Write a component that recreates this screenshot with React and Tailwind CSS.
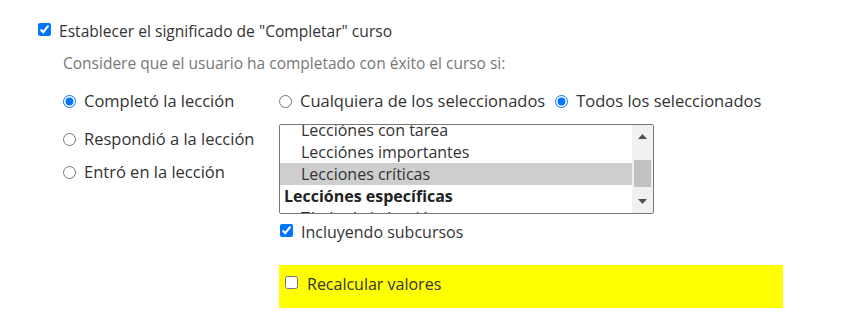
const font = { fontFamily: '"Open Sans", Lato, sans-serif' };

function Radio({ checked, label }) {
  return (
    <label className="flex items-center gap-[8px] h-[20px] leading-[20px] text-[16.5px] text-[#333]">
      <input type="radio" defaultChecked={checked} className="m-0 w-[13px] h-[13px]" />
      <span>{label}</span>
    </label>
  );
}

function ListBox() {
  const rows = [
    { text: 'Lecciónes con tarea', indent: true },
    { text: 'Lecciónes importantes', indent: true },
    { text: 'Lecciones críticas', indent: true, selected: true },
    { text: 'Lecciónes específicas', group: true },
    { text: 'Título de la lección', indent: true },
  ];
  return (
    <div className="flex w-[375px] h-[90px] border border-[#767676] rounded-[2px] overflow-hidden bg-white">
      <div className="flex-1 overflow-hidden">
        <div className="-mt-[6px]">
          {rows.map((r, i) => (
            <div
              key={i}
              className={`h-[22px] leading-[22px] text-[16px] whitespace-nowrap ${r.group ? 'pl-[4px] font-bold text-[#222]' : 'pl-[21px] text-[#333]'} ${r.selected ? 'bg-[#cecece]' : ''}`}
            >
              {r.text}
            </div>
          ))}
        </div>
      </div>
      <div className="w-[21px] bg-[#f1f1f1] flex flex-col items-center justify-between py-[9px] relative">
        <svg width="9" height="5" viewBox="0 0 9 5"><path d="M0 5 L4.5 0 L9 5 Z" fill="#505050" /></svg>
        <svg width="9" height="5" viewBox="0 0 9 5"><path d="M0 0 L4.5 5 L9 0 Z" fill="#505050" /></svg>
        <div className="absolute left-[2px] right-[2px] top-[35px] h-[27px] bg-[#c1c1c1]" />
      </div>
    </div>
  );
}

export default function App() {
  return (
    <div className="w-[864px] h-[317px] bg-white pl-[38px] pt-[21px]" style={font}>
      <label className="flex items-center gap-[8px] text-[15.6px] text-[#333] h-[20px] leading-[20px]">
        <input type="checkbox" defaultChecked className="m-0 mb-[3px] w-[13px] h-[13px]" />
        <span>Establecer el significado de "Completar" curso</span>
      </label>
      <div className="pl-[25px]">
        <p className="mt-[12px] h-[20px] text-[15.5px] text-[#777] leading-[20px] whitespace-nowrap">
          Considere que el usuario ha completado con éxito el curso si:
        </p>
        <div className="flex mt-[18px]">
          <div className="w-[216px] flex flex-col">
            <Radio checked label="Completó la lección" />
            <div className="mt-[18px]"><Radio label="Respondió a la lección" /></div>
            <div className="mt-[13px]"><Radio label="Entró en la lección" /></div>
          </div>
          <div className="flex flex-col">
            <div className="flex items-center gap-[10px] whitespace-nowrap">
              <Radio label="Cualquiera de los seleccionados" />
              <Radio checked label="Todos los seleccionados" />
            </div>
            <div className="mt-[13px]">
              <ListBox />
            </div>
            <label className="mt-[8px] ml-[1px] flex items-center gap-[8px] h-[20px] leading-[20px] text-[16px] text-[#333]">
              <input type="checkbox" defaultChecked className="m-0 mb-[3px] w-[13px] h-[13px]" />
              <span>Incluyendo subcursos</span>
            </label>
            <div className="mt-[23px] w-[504px] h-[43px] bg-[#ffff00] pl-[6px] pt-[9px]">
              <label className="flex items-center gap-[9px] h-[20px] leading-[20px] text-[16px] text-[#333]">
                <input type="checkbox" className="m-0 mb-[3px] w-[13px] h-[13px]" />
                <span>Recalcular valores</span>
              </label>
            </div>
          </div>
        </div>
      </div>
    </div>
  );
}
